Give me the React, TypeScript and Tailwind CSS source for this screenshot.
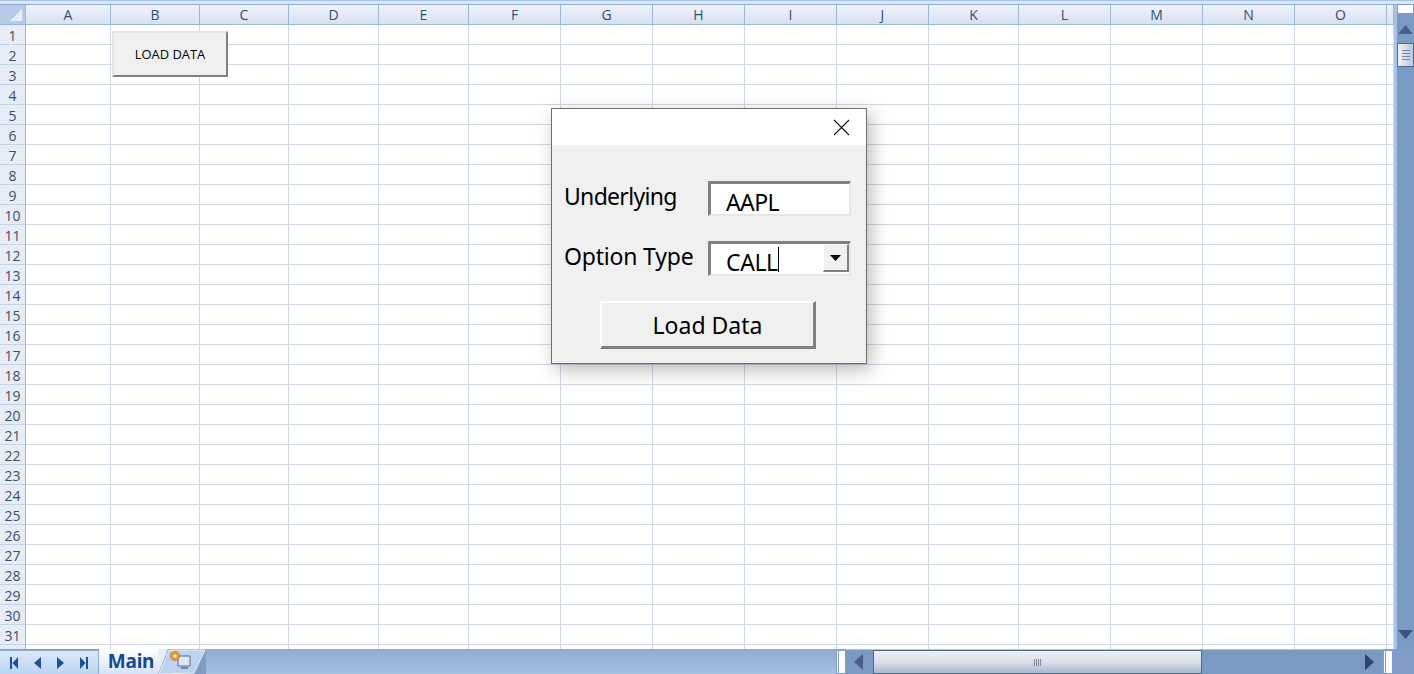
const columns = [
  { name: "A", width: "w-[85px]" },
  { name: "B", width: "w-[89px]" },
  { name: "C", width: "w-[89px]" },
  { name: "D", width: "w-[90px]" },
  { name: "E", width: "w-[90px]" },
  { name: "F", width: "w-[92px]" },
  { name: "G", width: "w-[92px]" },
  { name: "H", width: "w-[92px]" },
  { name: "I", width: "w-[92px]" },
  { name: "J", width: "w-[92px]" },
  { name: "K", width: "w-[90px]" },
  { name: "L", width: "w-[92px]" },
  { name: "M", width: "w-[92px]" },
  { name: "N", width: "w-[92px]" },
  { name: "O", width: "w-[92px]" },
  { name: "", width: "w-[7px]" },
];

const rows = Array.from({ length: 32 }, (_, i) => i + 1);

function ColumnHeader() {
  return (
    <div className="flex h-[20px] shrink-0 bg-gradient-to-b from-[#f0f4fa] to-[#d6e1f0] border-b border-[#9db6d3]">
      <div className="w-[26px] h-[19px] shrink-0 bg-[#b4cbe9] border-r border-[#9db6d3] flex items-end justify-end p-[2px]">
        <svg width="14" height="14" viewBox="0 0 14 14">
          <path d="M13 1 V13 H1 Z" fill="#e6eef8" />
        </svg>
      </div>
      {columns.map((col) => (
        <div
          key={col.name || "end"}
          className={`${col.width} shrink-0 border-r border-[#9db6d3] flex items-center justify-center text-[14px] text-[#34506f]`}
        >
          {col.name}
        </div>
      ))}
    </div>
  );
}

function SheetRow({ row }: { row: number }) {
  return (
    <div className="flex h-[20px] shrink-0">
      <div className="w-[26px] shrink-0 bg-[#e6edf7] border-r border-b border-[#9db6d3] border-b-[#c5d3e6] flex items-center justify-center pt-[1px] text-[14px] text-[#3f4f63]">
        {row < 32 ? row : ""}
      </div>
      {columns.map((col) => (
        <div
          key={col.name || "end"}
          className={`${col.width} shrink-0 bg-white border-r border-b border-[#d0d7e5]`}
        />
      ))}
    </div>
  );
}

function SunkenBox({ children }: { children: React.ReactNode }) {
  return (
    <div className="w-[143px] h-[35px] flex bg-white border-t-[3px] border-l-[3px] border-t-[#808080] border-l-[#808080] border-b-2 border-r-2 border-b-[#e6e6e6] border-r-[#e6e6e6]">
      {children}
    </div>
  );
}

function Dialog() {
  return (
    <div className="absolute left-[551px] top-[103px] w-[316px] h-[256px] bg-[#f0f0f0] border border-[#6e6e6e] shadow-[4px_6px_18px_rgba(0,0,0,0.28)] flex flex-col font-['Noto_Sans',sans-serif] text-black">
      <div className="h-[36px] shrink-0 bg-white flex items-center justify-end pr-[16px]">
        <svg width="17" height="17" viewBox="0 0 17 17" stroke="#111" strokeWidth="1.1" fill="none">
          <path d="M1 1 L16 16 M16 1 L1 16" />
        </svg>
      </div>
      <div className="flex flex-col pl-[12px] pt-[36px]">
        <div className="flex items-start h-[60px]">
          <div className="w-[144px] -mt-[1px] text-[23px] leading-[32px] tracking-[-0.7px]">Underlying</div>
          <SunkenBox>
            <span className="pl-[15px] pt-[2px] text-[23px] leading-[32px] tracking-[-0.6px]">AAPL</span>
          </SunkenBox>
        </div>
        <div className="flex items-start h-[60px]">
          <div className="w-[144px] -mt-[1px] text-[23px] leading-[32px] tracking-[-0.2px]">Option Type</div>
          <SunkenBox>
            <span className="flex-1 pl-[15px] pt-[2px] text-[23px] leading-[32px] tracking-[-0.4px] flex">
              CALL
              <span className="w-px h-[25px] mt-[1px] bg-black" />
            </span>
            <div className="w-[26px] h-[28px] bg-[#f0f0f0] border-l border-t border-white border-r-2 border-b-2 border-r-[#808080] border-b-[#808080] flex items-center justify-center">
              <svg width="11" height="6" viewBox="0 0 11 6">
                <path d="M0 0 H11 L5.5 6 Z" fill="#000" />
              </svg>
            </div>
          </SunkenBox>
        </div>
        <button className="ml-[36px] w-[216px] h-[48px] bg-[#f0f0f0] border-t-2 border-l-2 border-t-white border-l-white border-r-[3px] border-b-[3px] border-r-[#808080] border-b-[#808080] text-[23px] leading-[30px]">
          Load Data
        </button>
      </div>
    </div>
  );
}

function VerticalScrollbar() {
  return (
    <div className="w-[20px] shrink-0 flex bg-[#7a9ac4]">
      <div className="w-[3px] bg-[#a9c3e8]" />
      <div className="flex-1 flex flex-col items-center">
        <div className="w-[17px] h-[10px] mt-[-1px] bg-white border border-[#7f9dc6]" />
        <svg className="mt-[11px]" width="15" height="9" viewBox="0 0 15 9">
          <path d="M7.5 0 L15 9 H0 Z" fill="#4a5d8c" />
        </svg>
        <div className="mt-[9px] w-[17px] h-[24px] bg-gradient-to-r from-[#f0f3f8] to-[#b9c6da] border border-[#52688f] flex flex-col items-center justify-center gap-[2px]">
          <div className="w-[8px] h-px bg-[#7c8696]" />
          <div className="w-[8px] h-px bg-[#7c8696]" />
          <div className="w-[8px] h-px bg-[#7c8696]" />
          <div className="w-[8px] h-px bg-[#7c8696]" />
        </div>
        <svg className="mt-auto mb-[10px]" width="15" height="9" viewBox="0 0 15 9">
          <path d="M0 0 H15 L7.5 9 Z" fill="#3f5080" />
        </svg>
      </div>
    </div>
  );
}

function NavArrows() {
  return (
    <div className="w-[99px] h-[24px] shrink-0 flex items-center justify-between pl-[10px] pr-[10px] bg-gradient-to-b from-[#dbe8f9] to-[#bcd4f1] border-r border-t border-[#8fa9cf]">
      <svg width="8" height="12" viewBox="0 0 8 12" fill="#1f4f96">
        <path d="M0 0 H2 V12 H0 Z M8 0 V12 L2.5 6 Z" />
      </svg>
      <svg width="7" height="12" viewBox="0 0 7 12" fill="#1f4f96">
        <path d="M7 0 V12 L0 6 Z" />
      </svg>
      <svg width="7" height="12" viewBox="0 0 7 12" fill="#1f4f96">
        <path d="M0 0 V12 L7 6 Z" />
      </svg>
      <svg width="8" height="12" viewBox="0 0 8 12" fill="#1f4f96">
        <path d="M6 0 H8 V12 H6 Z M0 0 V12 L5.5 6 Z" />
      </svg>
    </div>
  );
}

function SheetTabs() {
  return (
    <div className="flex shrink-0 h-[25px]">
      <div className="w-[59px] h-[25px] bg-gradient-to-b from-white to-[#d4e3f6] flex items-center justify-center pl-[5px] text-[19px] font-bold text-[#15488f] font-['Noto_Sans',sans-serif] tracking-[-0.2px]">
        Main
      </div>
      <svg width="48" height="25" viewBox="0 0 48 25">
        <path d="M0 25 L10 0 H0 Z" fill="#e4edf9" />
        <path d="M1 25 L11 1 H47 L36 24 Z" fill="#bdd2ee" stroke="#e8f0fa" />
        <path d="M20 7 H32 V17 H20 Z" fill="#dfe7f2" stroke="#5d6f88" />
        <path d="M23 19 H30" stroke="#5d6f88" strokeWidth="1.5" />
        <circle cx="17" cy="7" r="4.5" fill="#e79a3a" stroke="#b8651a" strokeDasharray="2 1" />
        <circle cx="17" cy="7" r="1.5" fill="#fff4d8" />
      </svg>
    </div>
  );
}

function Splitter() {
  return (
    <div className="w-[10px] h-[24px] shrink-0 bg-white border border-[#7f9dc6] flex items-stretch">
      <div className="w-px ml-[1px] bg-[#7f9dc6]" />
    </div>
  );
}

function HorizontalScrollbar() {
  return (
    <div className="flex-1 flex items-center h-full bg-[#7a9ac4] border-t border-[#a9c3e8]">
      <svg className="ml-[8px] shrink-0" width="9" height="16" viewBox="0 0 9 16">
        <path d="M9 0 V16 L0 8 Z" fill="#4a5d8c" />
      </svg>
      <div className="ml-[10px] w-[329px] h-[24px] shrink-0 bg-gradient-to-b from-[#eef1f6] via-[#d9dfe9] to-[#a9b7cc] border border-[#52688f] flex items-center justify-center gap-px">
        <div className="w-px h-[7px] bg-[#7c8696]" />
        <div className="w-px h-[7px] bg-[#7c8696]" />
        <div className="w-px h-[7px] bg-[#7c8696]" />
        <div className="w-px h-[7px] bg-[#7c8696]" />
      </div>
      <svg className="ml-auto mr-[9px] shrink-0" width="9" height="16" viewBox="0 0 9 16">
        <path d="M0 0 V16 L9 8 Z" fill="#2f4270" />
      </svg>
    </div>
  );
}

export default function App() {
  return (
    <div className="w-[1414px] h-[674px] flex flex-col overflow-hidden bg-white font-['Open_Sans',sans-serif]">
      <div className="h-[5px] shrink-0 bg-[#dce7f5] border-t border-[#a9c3e8] border-b border-b-[#8fa9cf]" />
      <div className="flex h-[644px] shrink-0">
        <div className="relative w-[1394px] shrink-0 overflow-hidden">
          <ColumnHeader />
          {rows.map((row) => (
            <SheetRow key={row} row={row} />
          ))}
          <button className="absolute left-[112px] top-[26px] w-[116px] h-[46px] pt-[1px] bg-[#f0f0f0] border-t-2 border-l-2 border-t-[#e4e4e4] border-l-[#e4e4e4] border-r-2 border-b-2 border-r-[#808080] border-b-[#808080] text-[12.9px] text-black">
            LOAD DATA
          </button>
          <Dialog />
        </div>
        <VerticalScrollbar />
      </div>
      <div className="flex h-[25px] shrink-0 items-end bg-[#7f9dc6]">
        <NavArrows />
        <SheetTabs />
        <div className="flex-1 h-full flex items-end bg-gradient-to-b from-[#8fabd4] to-[#a5bfe3]">
          <div className="ml-auto" />
          <Splitter />
        </div>
        <div className="w-[537px] h-full shrink-0 flex">
          <HorizontalScrollbar />
        </div>
        <Splitter />
        <div className="w-[21px] h-full shrink-0 bg-[#7f9dc6]" />
      </div>
    </div>
  );
}
